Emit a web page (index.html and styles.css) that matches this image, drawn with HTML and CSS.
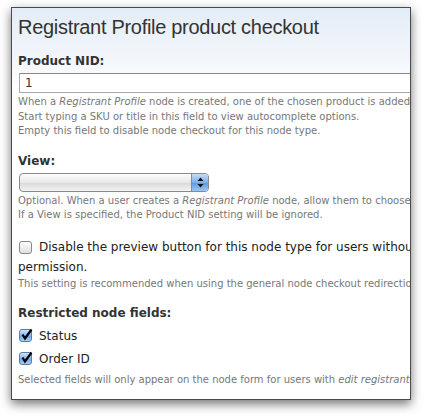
FILE: index.html
```html
<!DOCTYPE html>
<html>
<head>
<meta charset="utf-8">
<link rel="stylesheet" href="styles.css">
</head>
<body>
<div class="win">
  <h1 class="title">Registrant Profile product checkout</h1>
  <div class="item">
    <div class="label">Product NID:</div>
    <div class="input"><span>1</span></div>
    <div class="help">When a <em>Registrant Profile</em> node is created, one of the chosen product is added<br>Start typing a SKU or title in this field to view autocomplete options.<br>Empty this field to disable node checkout for this node type.</div>
  </div>
  <div class="item">
    <div class="label">View:</div>
    <div class="select"><div class="sel-btn"><svg width="7" height="11" viewBox="0 0 7 11"><path d="M3.5 0.5 L6.5 4 L0.5 4 Z M3.5 10.5 L6.5 7 L0.5 7 Z" fill="#111"/></svg></div></div>
    <div class="help">Optional. When a user creates a <em>Registrant Profile</em> node, allow them to choose<br>If a View is specified, the Product NID setting will be ignored.</div>
  </div>
  <div class="item item-check">
    <div class="check-row"><span class="cb"></span><span class="opt">Disable the preview button for this node type for users without</span></div>
    <div class="opt cont">permission.</div>
    <div class="help">This setting is recommended when using the general node checkout redirection</div>
  </div>
  <div class="item">
    <div class="label">Restricted node fields:</div>
    <div class="checks">
      <div class="check-row"><span class="cb on"><svg width="13" height="13" viewBox="0 0 13 13"><path d="M2.5 6.5 L5 10.5 L11.5 1.5" fill="none" stroke="#000" stroke-width="2.2"/></svg></span><span class="opt">Status</span></div>
      <div class="check-row"><span class="cb on"><svg width="13" height="13" viewBox="0 0 13 13"><path d="M2.5 6.5 L5 10.5 L11.5 1.5" fill="none" stroke="#000" stroke-width="2.2"/></svg></span><span class="opt">Order ID</span></div>
    </div>
    <div class="help help-last">Selected fields will only appear on the node form for users with <em>edit registrant profile</em></div>
  </div>
</div>
</body>
</html>
```

FILE: styles.css
```css
html, body { margin: 0; padding: 0; background: #fff; }
body { width: 424px; height: 416px; overflow: hidden; }
.win {
  margin: 7px 0 0 11px;
  width: 400px;
  height: 393px;
  border: 1px solid #4a4a4a;
  box-shadow: 0 4px 10px rgba(0,0,0,0.55);
  background: linear-gradient(#e3edf7 0px, #f2f6fb 50px, #ffffff 80px);
  overflow: hidden;
  box-sizing: border-box;
  padding: 0 0 0 6px;
  font-family: "DejaVu Sans", Verdana, sans-serif;
  color: #333;
  white-space: nowrap;
}
.title {
  font-family: "Liberation Sans", Arial, sans-serif;
  font-weight: normal;
  font-size: 20px;
  letter-spacing: -0.3px;
  color: #333;
  margin: 0;
  padding-top: 7px;
  line-height: 24px;
}
.item { margin-top: 14px; }
.item-check { margin-top: 13px; }
.label { font-weight: bold; font-size: 12px; line-height: 16px; color: #333; }
.input {
  margin: 4px 0 0 1px;
  width: 420px;
  height: 20px;
  border: 1px solid #aaa;
  border-top-color: #888;
  background: #fff;
  box-sizing: border-box;
  font-size: 12px;
  line-height: 18px;
  padding-left: 5px;
}
.help { font-size: 10px; line-height: 14.5px; color: #777; margin-top: 2px; }
.help-last { margin-top: 3px; }
.select {
  margin: 4px 0 0 1px;
  width: 190px;
  height: 19px;
  box-sizing: border-box;
  border: 1px solid #8a8a8a;
  border-radius: 4px;
  background: linear-gradient(#fdfdfd, #e8e8e8 50%, #d9d9d9 51%, #f4f4f4);
  display: flex;
  justify-content: flex-end;
  overflow: hidden;
}
.sel-btn {
  width: 16px;
  height: 100%;
  background: linear-gradient(#c5dcf5, #7fb0ea 50%, #5b98e2 51%, #9cc7f4);
  border-left: 1px solid #6c8fc0;
  display: flex;
  align-items: center;
  justify-content: center;
}
.checks { margin-top: 3px; }
.check-row { display: flex; align-items: center; gap: 7px; margin-left: 1px; height: 23px; }
.cb {
  width: 13px; height: 13px;
  box-sizing: border-box;
  border: 1px solid #888;
  border-radius: 3px;
  background: linear-gradient(#fdfdfd, #e0e0e0);
  position: relative;
  flex: none;
}
.cb.on { background: linear-gradient(#cfe3f8, #86b6ec 50%, #6aa2e6 51%, #a9d0f6); border-color: #5a7ca8; }
.cb.on svg { position: absolute; left: 0; top: -2px; }
.opt { font-size: 12px; color: #222; }
.cont { line-height: 16px; }
```
